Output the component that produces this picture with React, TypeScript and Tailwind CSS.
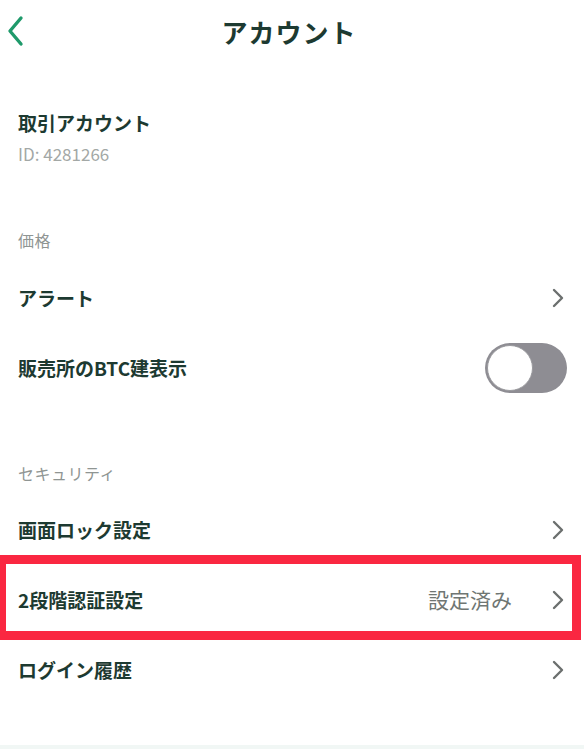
import type { ReactNode } from "react";

const FONT = { fontFamily: '"Noto Sans CJK JP", "Noto Sans", sans-serif' };

function Chevron() {
    return (
        <svg width="12" height="20" viewBox="0 0 12 20" fill="none" className="shrink-0">
            <path d="M2 2l8 8-8 8" stroke="#6b6f6e" strokeWidth="2.4" strokeLinecap="round" strokeLinejoin="round" />
        </svg>
    );
}

function Row({ label, right, children }: { label: string; right?: ReactNode; children?: ReactNode }) {
    return (
        <div className="relative flex h-[70px] items-center justify-between pl-[18px] pr-[20px]">
            <span className="text-[19px] font-bold text-[#1d3a31]">{label}</span>
            {right}
            {children}
        </div>
    );
}

function Section({ label }: { label: string }) {
    return <div className="pl-[18px] text-[16px] leading-[24px] tracking-[0.5px] text-[#8f9593]">{label}</div>;
}

export default function App() {
    return (
        <div className="flex h-[749px] w-[584px] flex-col overflow-hidden bg-white" style={FONT}>
            {/* header */}
            <div className="relative flex h-[62px] items-center justify-center">
                <svg width="20" height="32" viewBox="0 0 20 32" fill="none" className="absolute left-[6px] top-[15px]">
                    <path d="M15 3L4 16l11 13" stroke="#1f9a6b" strokeWidth="3.4" strokeLinecap="round" strokeLinejoin="round" />
                </svg>
                <h1 className="mr-[6px] text-[26px] font-bold tracking-[1px] text-[#1d3a31]">アカウント</h1>
            </div>

            {/* account */}
            <div className="mt-[47px] pl-[18px]">
                <div className="text-[19px] font-bold leading-[28px] text-[#1d3a31]">取引アカウント</div>
                <div className="mt-[6px] text-[17px] leading-[22px] text-[#a3a8a6]">ID: 4281266</div>
            </div>

            <div className="mt-[63px]">
                <Section label="価格" />
            </div>
            <div className="mt-[11px]">
                <Row label="アラート" right={<Chevron />} />
                <Row
                    label="販売所のBTC建表示"
                    right={
                        <div className="-mr-[3px] flex h-[50px] w-[82px] items-center rounded-full bg-[#8e8d93] p-[2px]">
                            <div className="h-[46px] w-[46px] rounded-full border border-[#9a9a9e] bg-white" />
                        </div>
                    }
                />
            </div>

            <div className="mt-[58px]">
                <Section label="セキュリティ" />
            </div>
            <div className="mt-[10px]">
                <Row label="画面ロック設定" right={<Chevron />} />
                <Row
                    label="2段階認証設定"
                    right={
                        <div className="flex items-center gap-[40px]">
                            <span className="text-[21px] text-[#6f7673]">設定済み</span>
                            <Chevron />
                        </div>
                    }
                >
                    <div className="pointer-events-none absolute bottom-[-5px] left-0 right-[3px] top-[-10px] border-[9px] border-l-[6px] border-[#fa2741]" />
                </Row>
                <Row label="ログイン履歴" right={<Chevron />} />
            </div>

            <div className="mt-auto h-[4px] bg-[#f1f7f5]" />
        </div>
    );
}
